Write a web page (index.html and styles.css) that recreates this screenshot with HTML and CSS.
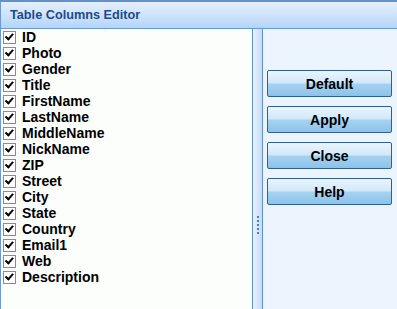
FILE: index.html
```html
<!DOCTYPE html>
<html lang="en">
<head>
    <meta charset="UTF-8">
    <title>Table Columns Editor</title>
    <link rel="stylesheet" href="styles.css">
</head>
<body>
    <div class="window">
        <div class="titlebar">Table Columns Editor</div>
        <div class="content">
            <ul class="columns">
                <li><span class="check"></span>ID</li>
                <li><span class="check"></span>Photo</li>
                <li><span class="check"></span>Gender</li>
                <li><span class="check"></span>Title</li>
                <li><span class="check"></span>FirstName</li>
                <li><span class="check"></span>LastName</li>
                <li><span class="check"></span>MiddleName</li>
                <li><span class="check"></span>NickName</li>
                <li><span class="check"></span>ZIP</li>
                <li><span class="check"></span>Street</li>
                <li><span class="check"></span>City</li>
                <li><span class="check"></span>State</li>
                <li><span class="check"></span>Country</li>
                <li><span class="check"></span>Email1</li>
                <li><span class="check"></span>Web</li>
                <li><span class="check"></span>Description</li>
            </ul>
            <div class="splitter">
                <div class="grip"><i></i><i></i><i></i><i></i><i></i></div>
            </div>
            <div class="actions">
                <button class="btn">Default</button>
                <button class="btn">Apply</button>
                <button class="btn">Close</button>
                <button class="btn">Help</button>
            </div>
        </div>
    </div>
</body>
</html>
```

FILE: styles.css
```css
html, body {
    margin: 0;
    padding: 0;
    height: 100%;
    overflow: hidden;
}

.window {
    display: flex;
    flex-direction: column;
    height: 100%;
    box-sizing: border-box;
    border-top: 2px solid #6390c9;
    border-left: 1px solid #6a9ad6;
    font-family: "Liberation Sans", Arial, sans-serif;
}

.titlebar {
    height: 26px;
    line-height: 26px;
    padding-left: 9px;
    font-size: 12.7px;
    font-weight: bold;
    color: #1c4a8e;
    background: linear-gradient(#e4effd, #cfe3fb 50%, #b3d4f9);
    border-bottom: 1px solid #6a9ad6;
}

.content {
    flex: 1;
    display: flex;
    min-height: 0;
}

.columns {
    list-style: none;
    margin: 0;
    padding: 0 0 0 2px;
    width: 249px;
    background: #fcfefc;
}

.columns li {
    display: flex;
    align-items: center;
    height: 16px;
    font-size: 14px;
    font-weight: bold;
    color: #000;
}

.check {
    position: relative;
    width: 11px;
    height: 11px;
    margin-right: 6px;
    border: 1px solid #8c8c8c;
    background: #fff;
}

.check::after {
    content: "";
    position: absolute;
    left: 2px;
    top: 1px;
    width: 6px;
    height: 3px;
    border-left: 2px solid #000;
    border-bottom: 2px solid #000;
    transform: translate(0, 1px) rotate(-48deg);
    transform-origin: 3px 3px;
}

.splitter {
    width: 9px;
    border-left: 1px solid #5f8fcd;
    border-right: 1px solid #5f8fcd;
    background: linear-gradient(to right, #eaf2fd, #c6dcf7);
    display: flex;
    justify-content: center;
    align-items: flex-start;
    padding-top: 187px;
    box-sizing: border-box;
    width: 11px;
}

.grip {
    display: flex;
    flex-direction: column;
    gap: 2px;
}

.grip i {
    display: block;
    width: 2px;
    height: 2px;
    background: #4d7fc2;
}

.actions {
    flex: 1;
    display: flex;
    flex-direction: column;
    gap: 9px;
    padding: 41px 0 0 4px;
    background: #ecf5fe;
}

.btn {
    width: 125px;
    height: 27px;
    padding: 0;
    border: 1px solid #2e5f96;
    border-radius: 2px;
    background: linear-gradient(#eaf5fd, #d1e8f9 48%, #a6d2f1 52%, #8cc3ea);
    font-family: "Liberation Sans", Arial, sans-serif;
    font-size: 14px;
    font-weight: bold;
    color: #000;
}
```
